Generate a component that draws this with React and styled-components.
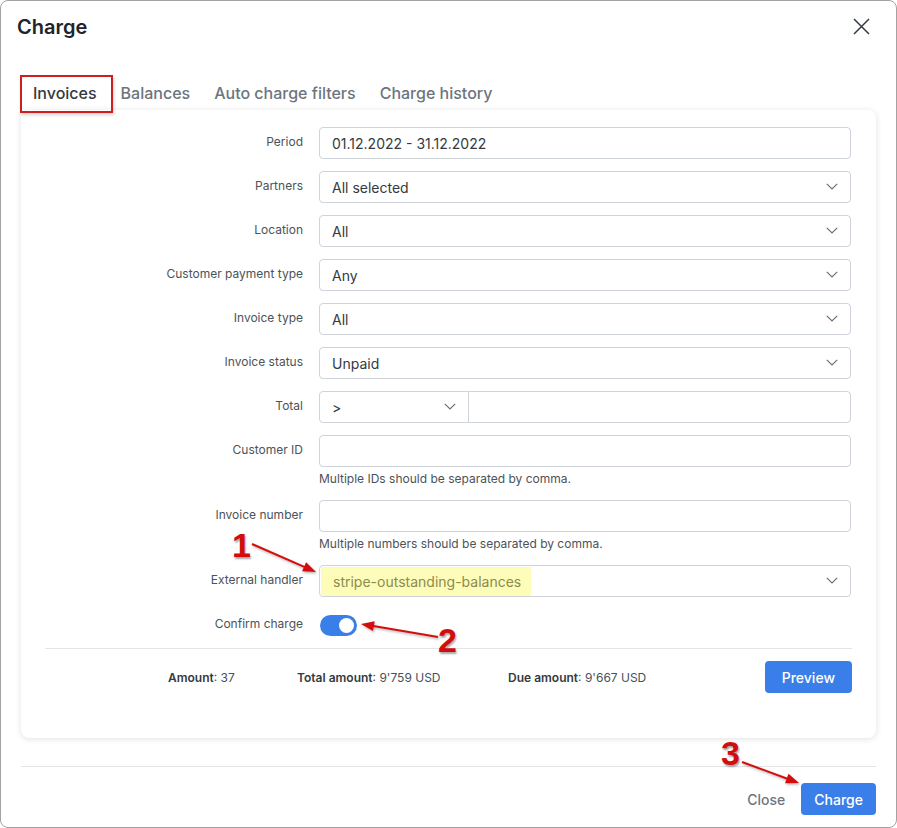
import React from "react";
import styled, { createGlobalStyle } from "styled-components";

const Global = createGlobalStyle`
  html, body { margin: 0; padding: 0; background: #fff; }
  body { font-family: Inter, "Noto Sans", Arial, sans-serif; color: #343a40; }
  * { box-sizing: border-box; }
`;

const Modal = styled.div`
  position: relative;
  width: 897px;
  height: 828px;
  border: 1px solid #a3a3a3;
  border-radius: 8px;
  background: #fff;
  display: flex;
  flex-direction: column;
`;

const Header = styled.div`
  height: 51px;
  display: flex;
  align-items: center;
  justify-content: space-between;
  padding: 0 26px 0 16px;
`;

const Title = styled.h2`
  margin: 0;
  font-size: 20px;
  font-weight: 600;
  color: #212529;
  line-height: 24px;
`;

const CloseIcon = styled.button`
  border: 0;
  background: none;
  padding: 0;
  width: 18px;
  height: 18px;
  display: flex;
  align-items: center;
  justify-content: center;
  margin-top: -1px;
`;

const Body = styled.div`
  padding: 24px 20px 0;
`;

const Tabs = styled.div`
  display: flex;
  height: 34px;
`;

const Tab = styled.div`
  position: relative;
  padding: 0 12px;
  line-height: 34px;
  font-size: 16px;
  font-weight: 500;
  color: ${(p) => (p.$active ? "#343a40" : "#6c757d")};
  ${(p) =>
    p.$active &&
    `
    &::after {
      content: "";
      position: absolute;
      left: -1px;
      right: -4px;
      top: -1px;
      bottom: -3px;
      border: 2px solid #cc1f1f;
      box-shadow: 1px 2px 3px rgba(0,0,0,0.18);
    }
  `}
`;

const Card = styled.div`
  background: #fff;
  border-radius: 8px;
  box-shadow: 0 1px 6px rgba(0, 0, 0, 0.12);
  padding: 17px 24px 45px;
`;

const Form = styled.div`
  display: flex;
  flex-direction: column;
  gap: 12px;
`;

const Row = styled.div`
  display: grid;
  grid-template-columns: 258px 532px;
  column-gap: 16px;
  align-items: start;
`;

const Label = styled.label`
  text-align: right;
  font-size: 12px;
  line-height: 30px;
  color: #4d5257;
`;

const Field = styled.div`
  display: flex;
  flex-direction: column;
`;

const Input = styled.div`
  position: relative;
  height: 32px;
  border: 1px solid #ced4da;
  border-radius: ${(p) => p.$radius || "4px"};
  display: flex;
  align-items: center;
  padding-left: ${(p) => (p.$hl ? "1px" : "12px")};
  font-size: 14px;
  color: #343a40;
  flex: ${(p) => p.$flex || "none"};
  width: ${(p) => p.$width || "auto"};
  background: #fff;
  ${(p) => p.$joinLeft && "margin-left: -1px;"}
`;

const Value = styled.span`
  white-space: nowrap;
`;

const Highlight = styled.span`
  height: 29px;
  line-height: 29px;
  padding: 0 10px 0 12px;
  background: #fdfdb9;
  color: #8d8b4e;
  white-space: nowrap;
`;

const Chevron = styled.svg`
  position: absolute;
  right: 12px;
  top: 50%;
  margin-top: -4px;
`;

const Group = styled.div`
  display: flex;
`;

const Help = styled.div`
  margin-top: 3px;
  font-size: 12px;
  line-height: 18px;
  color: #4d5257;
`;

const ToggleWrap = styled.div`
  height: 32px;
  display: flex;
  align-items: center;
`;

const Toggle = styled.div`
  width: 37px;
  height: 21px;
  border-radius: 11px;
  background: #3a7fe9;
  position: relative;
  margin-left: 1px;
  &::after {
    content: "";
    position: absolute;
    right: 3px;
    top: 3px;
    width: 15px;
    height: 15px;
    border-radius: 50%;
    background: #fff;
  }
`;

const Divider = styled.hr`
  border: 0;
  border-top: 1px solid #e3e5e8;
  margin: ${(p) => p.$margin || "0"};
`;

const Summary = styled.div`
  display: grid;
  grid-template-columns: 129px 211px 1fr auto;
  align-items: center;
  padding: 12px 0 0 123px;
  font-size: 12px;
  color: #495057;
`;

const SumItem = styled.div`
  white-space: nowrap;
  b {
    font-weight: 600;
    color: #343a40;
  }
`;

const Button = styled.button`
  height: 32px;
  padding: 0 ${(p) => p.$px || "13px"};
  border: 0;
  border-radius: 4px;
  background: ${(p) => (p.$link ? "transparent" : "#3a7fe9")};
  color: ${(p) => (p.$link ? "#6c757d" : "#fff")};
  font-family: Inter, sans-serif;
  font-size: 14px;
  font-weight: 500;
`;

const Footer = styled.div`
  display: flex;
  justify-content: flex-end;
  align-items: center;
  gap: 0;
  padding: 16px 20px 12px;
`;

const Overlay = styled.svg`
  position: absolute;
  left: -1px;
  top: -1px;
  pointer-events: none;
`;

const Num = styled.span`
  position: absolute;
  left: ${(p) => p.$x}px;
  top: ${(p) => p.$y}px;
  font-family: "Liberation Sans", Arial, sans-serif;
  font-weight: 700;
  font-size: 34px;
  line-height: 34px;
  color: #d10d0d;
  text-shadow: 1px 2px 2px rgba(0, 0, 0, 0.35);
  pointer-events: none;
`;

const ChevronIcon = () => (
  <Chevron width="12" height="7" viewBox="0 0 12 7">
    <path d="M0.8 0.8 L6 6 L11.2 0.8" fill="none" stroke="#6b7075" strokeWidth="1.2" />
  </Chevron>
);

function Arrow({ x1, y1, x2, y2 }) {
  const dx = x2 - x1;
  const dy = y2 - y1;
  const len = Math.sqrt(dx * dx + dy * dy);
  const ux = dx / len;
  const uy = dy / len;
  const hl = 13;
  const hw = 5;
  const bx = x2 - ux * hl;
  const by = y2 - uy * hl;
  const p1 = `${bx - uy * hw},${by + ux * hw}`;
  const p2 = `${bx + uy * hw},${by - ux * hw}`;
  return (
    <g filter="url(#sh)">
      <line x1={x1} y1={y1} x2={bx + ux * 2} y2={by + uy * 2} stroke="#d10d0d" strokeWidth="2" />
      <polygon points={`${x2},${y2} ${p1} ${p2}`} fill="#d10d0d" />
    </g>
  );
}

const FormRow = ({ label, children, help }) => (
  <Row>
    <Label>{label}</Label>
    <Field>
      {children}
      {help && <Help>{help}</Help>}
    </Field>
  </Row>
);

const Select = ({ value }) => (
  <Input>
    <Value>{value}</Value>
    <ChevronIcon />
  </Input>
);

export default function App() {
  return (
    <>
      <Global />
      <Modal>
        <Header>
          <Title>Charge</Title>
          <CloseIcon aria-label="Close">
            <svg width="17" height="17" viewBox="0 0 17 17">
              <path d="M1 1 L16 16 M16 1 L1 16" stroke="#343a40" strokeWidth="1.5" />
            </svg>
          </CloseIcon>
        </Header>
        <Body>
          <Tabs>
            <Tab $active>Invoices</Tab>
            <Tab>Balances</Tab>
            <Tab>Auto charge filters</Tab>
            <Tab>Charge history</Tab>
          </Tabs>
          <Card>
            <Form>
              <FormRow label="Period">
                <Input>
                  <Value>01.12.2022 - 31.12.2022</Value>
                </Input>
              </FormRow>
              <FormRow label="Partners">
                <Select value="All selected" />
              </FormRow>
              <FormRow label="Location">
                <Select value="All" />
              </FormRow>
              <FormRow label="Customer payment type">
                <Select value="Any" />
              </FormRow>
              <FormRow label="Invoice type">
                <Select value="All" />
              </FormRow>
              <FormRow label="Invoice status">
                <Select value="Unpaid" />
              </FormRow>
              <FormRow label="Total">
                <Group>
                  <Input $width="150px" $radius="4px 0 0 4px">
                    <Value>&gt;</Value>
                    <ChevronIcon />
                  </Input>
                  <Input $flex="1" $radius="0 4px 4px 0" $joinLeft />
                </Group>
              </FormRow>
              <FormRow label="Customer ID" help="Multiple IDs should be separated by comma.">
                <Input />
              </FormRow>
              <FormRow label="Invoice number" help="Multiple numbers should be separated by comma.">
                <Input />
              </FormRow>
              <FormRow label="External handler">
                <Input $hl>
                  <Highlight>stripe-outstanding-balances</Highlight>
                  <ChevronIcon />
                </Input>
              </FormRow>
              <FormRow label="Confirm charge">
                <ToggleWrap>
                  <Toggle />
                </ToggleWrap>
              </FormRow>
            </Form>
            <Divider $margin="7px 0 0" />
            <Summary>
              <SumItem>
                <b>Amount</b>: 37
              </SumItem>
              <SumItem>
                <b>Total amount</b>: 9'759 USD
              </SumItem>
              <SumItem>
                <b>Due amount</b>: 9'667 USD
              </SumItem>
              <Button $px="17px">Preview</Button>
            </Summary>
          </Card>
          <Divider $margin="28px 0 0" />
        </Body>
        <Footer>
          <Button $link $px="16px">Close</Button>
          <Button>Charge</Button>
        </Footer>
        <Overlay width="897" height="828" viewBox="0 0 897 828">
          <defs>
            <filter id="sh" x="-20%" y="-50%" width="140%" height="200%">
              <feDropShadow dx="1" dy="1.5" stdDeviation="1" floodColor="#000" floodOpacity="0.3" />
            </filter>
          </defs>
          <Arrow x1={252} y1={544} x2={316} y2={572} />
          <Arrow x1={438} y1={637} x2={361} y2={624} />
          <Arrow x1={742} y1={762} x2={799} y2={783} />
        </Overlay>
        <Num $x={231} $y={527}>1</Num>
        <Num $x={437} $y={622}>2</Num>
        <Num $x={720} $y={735}>3</Num>
      </Modal>
    </>
  );
}
